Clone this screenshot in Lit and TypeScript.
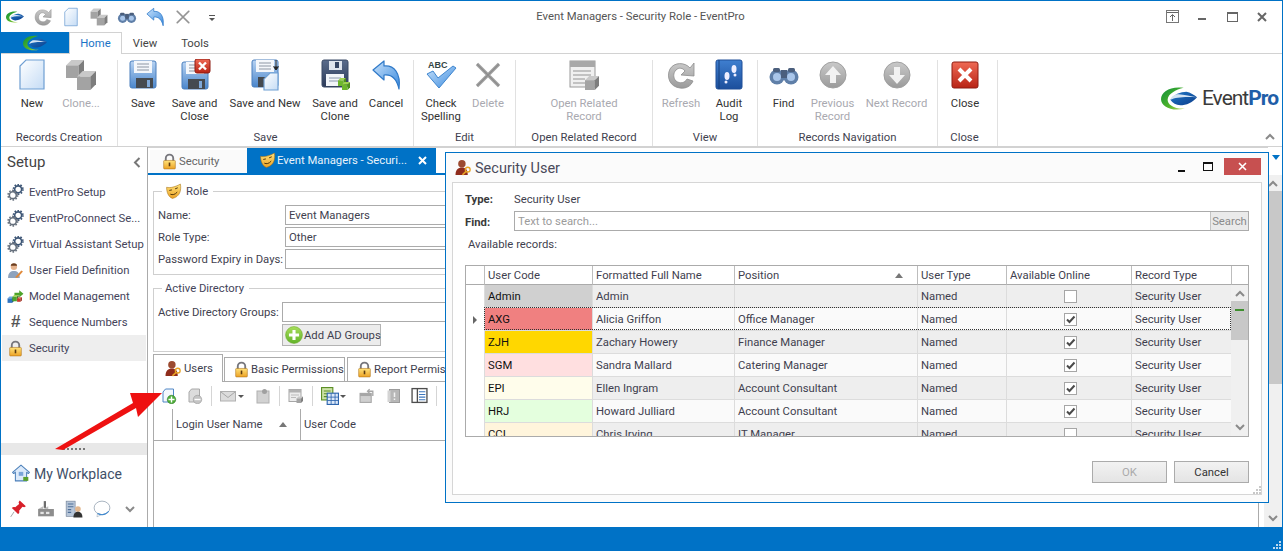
import { LitElement, html, css, svg } from "lit";
import { customElement } from "lit/decorators.js";

const ic = (s: number, body: unknown, vb = 32) =>
  html`<svg class="ic" width=${s} height=${s} viewBox="0 0 ${vb} ${vb}">${body}</svg>`;

const cube = (x: number, y: number, s: number, t = "#c9c9c9", l = "#a3a3a3", r = "#7d7d7d") => svg`
  <polygon points="${x},${y + s * 0.3} ${x + s * 0.3},${y} ${x + s},${y} ${x + s * 0.7},${y + s * 0.3}" fill=${t}/>
  <polygon points="${x},${y + s * 0.3} ${x + s * 0.7},${y + s * 0.3} ${x + s * 0.7},${y + s} ${x},${y + s}" fill=${l}/>
  <polygon points="${x + s * 0.7},${y + s * 0.3} ${x + s},${y} ${x + s},${y + s * 0.7} ${x + s * 0.7},${y + s}" fill=${r}/>`;

const swoosh = svg`
  <path d="M34 2 C14 -1 0 8 0 19 C0 30 16 38 36 33 C20 34 9 27 10 19 C11 11 22 5 34 2Z" fill="url(#gGreen)"/>
  <path d="M14 20 C18 12 30 8 38 8 C44 9 50 13 54 16 C50 21 42 27 32 28 C24 29 18 26 14 20Z" fill="url(#gBlue)"/>
  <path d="M14 20 C22 16 34 15 54 16 C44 15 30 10 22 12 C18 14 15 17 14 20Z" fill="#e8f2fb" opacity=".9"/>`;
const logoMark = (w: number, h: number) => html`<svg class="ic" width=${w} height=${h} viewBox="0 0 54 36">${swoosh}</svg>`;

const page = (x = 5, y = 2, w = 22, h = 28) => svg`
  <path d="M${x + 6} ${y}H${x + w}V${y + h}H${x}V${y + 6}Z" fill="url(#gPage)" stroke="#6f9fd3" stroke-width="1.2"/>`;

const floppy = (dark = false, yo = 2) => svg`
  <rect x="3" y=${yo} width="26" height="27" rx="2" fill=${dark ? "url(#gDark)" : "url(#gFloppy)"} stroke=${dark ? "#3b4a66" : "#4a7fbd"}/>
  ${dark
    ? svg`<rect x="10" y=${yo + 1} width="13" height="9" fill="#dfe5ee"/><rect x="16" y=${yo + 2} width="4" height="6" fill="#354564"/>
          <rect x="7" y=${yo + 14} width="18" height="12" fill="#f2f5f9"/><path d="M10 ${yo + 18}h12M10 ${yo + 21}h12" stroke="#8a98ad"/>`
    : svg`<rect x="7" y=${yo} width="18" height="12" fill="#f4f7fb"/><path d="M10 ${yo + 3}h12M10 ${yo + 6}h12M10 ${yo + 9}h12" stroke="#8d96a3"/>
          <rect x="9" y=${yo + 17} width="17" height="10" fill="#454a50"/><rect x="20" y=${yo + 19} width="3" height="7" fill="#7fa9da"/>`}`;

const undoPath = svg`<path d="M3 11 L14 2 V7 C24 6 31 14 29 30 C27 21 22 15 14 16 V21Z" fill="url(#gUndo)" stroke="#2f79c8" stroke-width="1.2" stroke-linejoin="round"/>`;
const refreshPath = svg`<path d="M25 9 C20 3 9 3 5 10 C1 18 5 28 15 29 C21 30 26 27 28 22 L22 20 C20 24 15 25 11 22 C8 19 8 14 11 11 C14 8 18 9 20 12 L16 16 L29 17 L29 4Z" fill="url(#gGrey)" stroke="#8d8d8d" stroke-width=".8"/>`;
const xPath = svg`<path d="M5 5 L27 27 M27 5 L5 27" stroke="#a5a5a5" stroke-width="3.4"/><path d="M5 5 L27 27 M27 5 L5 27" stroke="#8c8c8c" stroke-width="1.2"/>`;
const binoc = svg`
  <circle cx="9" cy="18" r="7.5" fill="#5f7fa8"/><circle cx="23" cy="18" r="7.5" fill="#5f7fa8"/>
  <rect x="13" y="11" width="6" height="8" fill="#4b5f7d"/>
  <circle cx="9" cy="18" r="4" fill="#a9c6ea"/><circle cx="23" cy="18" r="4" fill="#a9c6ea"/>
  <rect x="5" y="9" width="7" height="4" rx="1.5" fill="#4b5f7d"/><rect x="20" y="9" width="7" height="4" rx="1.5" fill="#4b5f7d"/>`;

const I = {
  qrefresh: ic(20, refreshPath),
  qnew: ic(20, page(6, 2, 20, 28)),
  clone: ic(32, svg`${cube(1, 1, 18)}${cube(12, 12, 19)}`),
  qclone: ic(18, svg`${cube(1, 1, 18)}${cube(12, 12, 19)}`),
  qfind: ic(20, binoc),
  qundo: ic(20, undoPath),
  qx: ic(18, xPath),
  new: ic(32, page(4, 1, 24, 29)),
  save: ic(32, floppy()),
  saveClose: ic(32, svg`${floppy(false, 3)}<rect x="16" y="0" width="15" height="14" rx="2" fill="url(#gRed)" stroke="#8e1c12"/><path d="M20 3.500l7 7m0-7l-7 7" stroke="#fff" stroke-width="2.400"/>`),
  saveNew: ic(32, svg`${floppy(false, 1)}${page(15, 14, 14, 17)}<path d="M27 1v9M24.500 7.500l2.500 3.500 2.500-3.500" stroke="#222" fill="#222"/>`),
  saveClone: ic(32, svg`${floppy(true, 1)}${cube(19, 19, 8, "#9ed24f", "#6cb52d", "#4d8f1c")}${cube(23, 23, 8, "#9ed24f", "#6cb52d", "#4d8f1c")}`),
  undo: ic(32, undoPath),
  check: ic(32, svg`<text x="3" y="9" font-family="Liberation Sans" font-weight="700" font-size="9" fill="#344">ABC</text>
    <path d="M2 15 L8 12 L13 19 L28 7 L31 9 L14 29Z" fill="url(#gUndo)" stroke="#3f86cf"/>`),
  del: ic(32, xPath),
  related: ic(32, svg`<rect x="2" y="2" width="25" height="26" fill="#f0f0f0" stroke="#9a9a9a"/><rect x="2" y="2" width="25" height="6" fill="#a8a8a8"/>
    <path d="M5 12h18M5 16h18M5 20h12M5 24h12" stroke="#b3b3b3" stroke-width="1.500"/>${cube(17, 17, 14)}`),
  refresh: ic(32, refreshPath),
  audit: ic(32, svg`<rect x="3" y="1" width="26" height="29" rx="2" fill="url(#gBook)" stroke="#1f4f98"/>
    <path d="M6 1v29" stroke="#16417f"/><ellipse cx="14" cy="17" rx="2.500" ry="4" fill="#eef"/><circle cx="13" cy="23" r="1.500" fill="#eef"/>
    <ellipse cx="21" cy="10" rx="2.500" ry="4" fill="#eef"/><circle cx="22" cy="16" r="1.500" fill="#eef"/>`),
  find: ic(32, binoc),
  prev: ic(32, svg`<circle cx="16" cy="16" r="13" fill="url(#gGrey)" stroke="#a0a0a0"/><path d="M16 7l8 9h-5v8h-6v-8h-5z" fill="#f2f2f2"/>`),
  next: ic(32, svg`<circle cx="16" cy="16" r="13" fill="url(#gGrey)" stroke="#a0a0a0"/><path d="M16 25l8-9h-5v-8h-6v8h-5z" fill="#f2f2f2"/>`),
  close: ic(32, svg`<rect x="3" y="3" width="26" height="26" rx="2" fill="url(#gRed)" stroke="#8e1c12"/><path d="M10 10l12 12m0-12l-12 12" stroke="#fff" stroke-width="4"/>`),
  gear: ic(17, svg`<circle cx="21" cy="10" r="6.500" fill="none" stroke="#3c5575" stroke-width="3"/><circle cx="21" cy="10" r="9" fill="none" stroke="#3c5575" stroke-width="3" stroke-dasharray="3 2.700"/>
    <circle cx="11" cy="21" r="6.500" fill="none" stroke="#66707d" stroke-width="3"/><circle cx="11" cy="21" r="9" fill="none" stroke="#66707d" stroke-width="3" stroke-dasharray="3 2.700"/>`),
  userPen: ic(17, svg`<circle cx="13" cy="9" r="6" fill="#e5b48f"/><path d="M7 7c1-6 11-6 12 0z" fill="#6b3d1e"/><path d="M2 30c0-10 5-13 11-13s11 3 11 13z" fill="#8ea3bd"/><path d="M17 27l10-11 3 2-10 11-4 1z" fill="#e0893a"/>`),
  model: ic(17, svg`${cube(1, 16, 12, "#6ea7e0", "#2f74c0", "#1f5596")}${cube(10, 13, 12, "#9ed24f", "#4da32b", "#347a1a")}${cube(19, 17, 9, "#ee8075", "#cc3a2c", "#962417")}
    <path d="M14 9h9v-5l8 7-8 7v-5h-9z" fill="#4da32b"/>`),
  lock: ic(17, svg`<path d="M9 15V10a7 7 0 0 1 14 0v5" fill="none" stroke="#77777d" stroke-width="3.500"/><rect x="5" y="14" width="22" height="16" rx="1.500" fill="url(#gLock)" stroke="#a96c15"/><rect x="14.500" y="18" width="3" height="7" fill="#5b3a10"/>`),
  mask: ic(17, svg`<path d="M3 8 C10 10 20 7 29 2 C31 14 28 26 14 29 C6 26 3 17 3 8Z" fill="url(#gLock)" stroke="#a36c10"/>
    <path d="M8 14l5-1M19 11l5-2M10 21c4 2 9 1 13-4" stroke="#4d3208" stroke-width="1.800" fill="none"/>`),
  plus: ic(18, svg`<circle cx="16" cy="16" r="15" fill="url(#gPlus)" stroke="#6eab2f"/><path d="M16 7v18M7 16h18" stroke="#fff" stroke-width="5.500"/>`),
  users: ic(17, svg`<circle cx="13" cy="9" r="7" fill="#9c4a30"/><path d="M1 30c0-10 5-14 12-14s11 4 11 14z" fill="#8f2c1c"/><circle cx="24" cy="20" r="4.500" fill="none" stroke="#e8a326" stroke-width="2.500"/><path d="M21 23l-7 7" stroke="#e8a326" stroke-width="3"/>`),
  home: ic(18, svg`<path d="M16 2L1 15l2 2 3-2.500V30h20V14.500l3 2.500 2-2z" fill="#dceafa" stroke="#4b7fb9" stroke-width="1.800" stroke-linejoin="round"/><rect x="12" y="14" width="8" height="7" fill="#7aa5d8"/><rect x="20" y="23" width="9" height="7" fill="#5aa02c"/>`),
  pin: ic(18, svg`<path d="M19 1l11 10-3 2-3-1-6 7c1 3 0 5-2 6L5 14c2-2 4-2 6-1l7-6-1-3z" fill="#d8202a"/><path d="M9 21L3 30" stroke="#999" stroke-width="1.500"/>`),
  factory: ic(18, svg`<rect x="2" y="16" width="28" height="13" fill="#8d8d8d"/><path d="M2 16l9-5v5l9-5v5h10" fill="#bdbdbd"/><rect x="12" y="2" width="4" height="12" fill="#6d6d6d"/><rect x="6" y="21" width="6" height="4" fill="#e4e4e4"/><rect x="16" y="21" width="6" height="4" fill="#e4e4e4"/>`),
  building: ic(18, svg`<rect x="2" y="2" width="16" height="27" fill="#b7c6d9" stroke="#67778d"/><path d="M5 7h10M5 12h10M5 17h6M5 22h6" stroke="#4f6f98" stroke-width="2"/><circle cx="23" cy="16" r="5" fill="#e3b78e"/><path d="M15 31c0-7 4-10 8-10s8 3 8 10z" fill="#333"/>`),
  bubble: ic(18, svg`<ellipse cx="16" cy="14" rx="14" ry="12" fill="#fff" stroke="#9aa7b5" stroke-width="1.500"/><path d="M8 24l-1 6 8-4z" fill="#fff" stroke="#9aa7b5"/><path d="M8 24c6 3 14 3 20-4" stroke="#3d88d0" stroke-width="2" fill="none"/>`),
  tAdd: ic(16, svg`<path d="M9 2H25V28H4V8Z" fill="#f4f8fd" stroke="#4f86c6" stroke-width="2"/><circle cx="21" cy="23" r="8.500" fill="#4fae3a" stroke="#1f6d17"/><path d="M21 17v12M15 23h12" stroke="#fff" stroke-width="2.800"/>`),
  tRemove: ic(16, svg`<path d="M9 2H25V28H4V8Z" fill="#dcdcdc" stroke="#a8a8a8" stroke-width="2"/><circle cx="21" cy="23" r="8.500" fill="#c4c4c4" stroke="#8f8f8f"/><path d="M15 23h12" stroke="#fff" stroke-width="2.800"/>`),
  tMail: ic(16, svg`<rect x="1" y="7" width="30" height="19" fill="#dcdcdc" stroke="#b0b0b0" stroke-width="2"/><path d="M2 8l14 11 14-11" stroke="#a8a8a8" stroke-width="2" fill="none"/>`),
  tClip: ic(16, svg`<rect x="4" y="6" width="24" height="24" fill="#d2d2d2" stroke="#b0b0b0" stroke-width="2"/><circle cx="19" cy="7" r="5" fill="#a0a0a0"/>`),
  tSheet: ic(16, svg`<rect x="2" y="3" width="24" height="24" fill="#ededed" stroke="#a6a6a6" stroke-width="2"/><rect x="2" y="3" width="24" height="6" fill="#b2b2b2"/><path d="M6 14h16M6 19h10" stroke="#bbb" stroke-width="2"/>${cube(17, 17, 13)}`),
  tGrid: ic(18, svg`<rect x="1" y="1" width="20" height="22" fill="#cde3a8" stroke="#5c8f26" stroke-width="2"/><path d="M5 7h12M5 12h12M5 17h12" stroke="#5c8f26" stroke-width="2"/><rect x="11" y="11" width="20" height="20" fill="#dce9f9" stroke="#2f66ae" stroke-width="2"/><path d="M11 18h20M11 24h20M18 11v20M25 11v20" stroke="#2f66ae" stroke-width="1.500"/>`),
  tWin: ic(17, svg`<rect x="2" y="12" width="21" height="17" fill="#cfcfcf" stroke="#a6a6a6" stroke-width="2"/><rect x="2" y="12" width="21" height="5" fill="#a6a6a6"/><path d="M17 8h9v9M20 4l-4 4 4 4" fill="none" stroke="#a6a6a6" stroke-width="2.500"/>`),
  tBook: ic(16, svg`<rect x="7" y="3" width="20" height="26" fill="#b7b7b7" stroke="#9c9c9c" stroke-width="2"/><rect x="3" y="5" width="6" height="23" fill="#d4d4d4"/><path d="M17 9v9M17 21v3" stroke="#f2f2f2" stroke-width="3"/>`),
  tPanel: ic(17, svg`<rect x="2" y="3" width="28" height="26" fill="#fff" stroke="#4e4e4e" stroke-width="2.500"/><path d="M12 3v26" stroke="#4e4e4e" stroke-width="2.500"/><path d="M15 9h12M15 14h12M15 19h12M15 24h12" stroke="#3d77bd" stroke-width="2"/>`),
  tRound: ic(16, svg`<circle cx="16" cy="16" r="14" fill="#cfcfcf" stroke="#a8a8a8" stroke-width="2"/>`),
};

const check = html`<svg class="ic" width="13" height="13" viewBox="0 0 13 13"><rect x=".5" y=".5" width="12" height="12" fill="#fff" stroke="#a6a6a6"/><path d="M3 6.500l2.500 2.500 5-5.500" fill="none" stroke="#4a4a4a" stroke-width="2"/></svg>`;
const box = html`<svg class="ic" width="13" height="13" viewBox="0 0 13 13"><rect x=".5" y=".5" width="12" height="12" fill="#fff" stroke="#a6a6a6"/></svg>`;
const chev = (up: boolean, c = "#8a8a8a") => html`<svg class="ic" width="10" height="7" viewBox="0 0 10 7"><path d=${up ? "M1 6l4-4 4 4" : "M1 1l4 4 4-4"} fill="none" stroke=${c} stroke-width="2"/></svg>`;

interface Btn { l: string; w: number; i: unknown; off?: boolean; }
interface Group { label: string; w: number; cls?: string; btns: Btn[]; }
const groups: Group[] = [
  { label: "Records Creation", w: 117, cls: "g1", btns: [
    { l: "New", w: 48, i: I.new }, { l: "Clone...", w: 50, i: I.clone, off: true } ] },
  { label: "Save", w: 296, cls: "g2", btns: [
    { l: "Save", w: 38, i: I.save }, { l: "Save and Close", w: 65, i: I.saveClose },
    { l: "Save and New", w: 76, i: I.saveNew }, { l: "Save and Clone", w: 64, i: I.saveClone }, { l: "Cancel", w: 38, i: I.undo } ] },
  { label: "Edit", w: 102, cls: "g3", btns: [
    { l: "Check Spelling", w: 50, i: I.check }, { l: "Delete", w: 44, i: I.del, off: true } ] },
  { label: "Open Related Record", w: 137, btns: [ { l: "Open Related Record", w: 100, i: I.related, off: true } ] },
  { label: "View", w: 105, btns: [
    { l: "Refresh", w: 48, i: I.refresh, off: true }, { l: "Audit Log", w: 48, i: I.audit } ] },
  { label: "Records Navigation", w: 180, btns: [
    { l: "Find", w: 44, i: I.find }, { l: "Previous Record", w: 54, i: I.prev, off: true }, { l: "Next Record", w: 74, i: I.next, off: true } ] },
  { label: "Close", w: 60, cls: "g7", btns: [ { l: "Close", w: 44, i: I.close } ] },
];

const side = [
  ["EventPro Setup", I.gear], ["EventProConnect Se...", I.gear], ["Virtual Assistant Setup", I.gear],
  ["User Field Definition", I.userPen], ["Model Management", I.model],
  ["Sequence Numbers", html`<span class="hash">#</span>`], ["Security", I.lock],
] as [string, unknown][];

const rows = [
  ["Admin", "Admin", "", false, "#d0d0d0"],
  ["AXG", "Alicia Griffon", "Office Manager", true, "#f08080"],
  ["ZJH", "Zachary Howery", "Finance Manager", true, "#ffd700"],
  ["SGM", "Sandra Mallard", "Catering Manager", true, "#ffdfe0"],
  ["EPI", "Ellen Ingram", "Account Consultant", true, "#fffdeb"],
  ["HRJ", "Howard Julliard", "Account Consultant", true, "#e4ffde"],
  ["CCI", "Chris Irving", "IT Manager", false, "#fff5dc"],
] as [string, string, string, boolean, string][];

@customElement("app-root")
export class AppRoot extends LitElement {
  static styles = css`
    :host { display: block; position: relative; width: 1283px; height: 551px; overflow: hidden; background: #fff;
      font-family: Roboto, "Noto Sans", sans-serif; font-size: 11.3px; color: #3f3f4f; }
    * { box-sizing: border-box; }
    .ic { display: block; flex: none; }
    .defs { position: absolute; width: 0; height: 0; }
    .app { display: flex; flex-direction: column; height: 551px; border: 1px solid #0072c6; border-bottom: 0; }
    .title { height: 31px; display: flex; align-items: center; position: relative; flex: none; }
    .qat { display: flex; align-items: center; }
    .qat > span { width: 28px; display: flex; justify-content: center; }
    .qat .dd { width: 6px; height: 4px; margin-left: 1px; border-top: 1px solid #555; position: relative; }
    .ddtri { width: 0; height: 0; border: 3px solid transparent; border-top: 3px solid #555; border-bottom: 0; display: block; margin-top: 2px; }
    .caption { position: absolute; left: 0; right: 2px; text-align: center; font-size: 11.3px; color: #555; top: 9px; }
    .winbtns { margin-left: auto; margin-right: 5px; display: flex; align-items: center; }
    .winbtns span { width: 30px; display: flex; justify-content: center; }
    .menu { height: 22px; display: flex; border-bottom: 1px solid #d2d2d2; flex: none; }
    .file { width: 68px; height: 21px; background: #0072c6; display: flex; align-items: center; justify-content: center; }
    .mt { width: 50px; text-align: center; line-height: 24px; color: #444; }
    .mt.on { width: 53px; height: 22px; color: #1a73c6; background: #fff; border: 1px solid #d2d2d2; border-bottom: 0; line-height: 22px; }
    .mt.v { margin-left: -2px; }
    .ribbon { height: 93px; display: flex; border-bottom: 1px solid #d2d2d2; flex: none; position: relative; }
    .group { display: flex; flex-direction: column; flex: none; align-items: stretch; position: relative; height: 86px; margin-top: 6px; border-right: 1px solid #e1e1e1; }
    .gbtns { display: flex; justify-content: center; height: 70px; }
    .g1 .gbtns { justify-content: flex-start; padding-left: 7px; }
    .g2 .gbtns { justify-content: flex-start; padding-left: 6px; }
    .g3 .gbtns { justify-content: flex-start; padding-left: 2px; }
    .g7 .gbtns { justify-content: flex-start; padding-left: 5px; }
    .g7 .glabel { padding-right: 6px; }
    .btn { display: flex; flex-direction: column; align-items: center; text-align: center; line-height: 13px; flex: none; color: #333; }
    .btn .ic { margin-bottom: 6px; margin-top: -1px; }
    .btn.off { color: #a9a9b0; }
    .glabel { text-align: center; line-height: 16px; color: #3f3f4f; margin-top: 1px; white-space: nowrap; }
    .brand { margin-left: auto; margin-right: 4px; display: flex; align-items: center; align-self: flex-start; margin-top: 31px; gap: 5px; }
    .brand b { font-size: 21px; letter-spacing: -1px; font-weight: 400; color: #3a3a3a; line-height: 27px; font-family: Roboto, sans-serif; }
    .brand b i { font-style: normal; font-weight: 700; color: #1f5ea8; }
    .collapse { position: absolute; right: 7px; bottom: 6px; }
    .body { flex: 1; min-height: 0; display: flex; }
    .side { width: 147px; flex: none; border-right: 1px solid #ababab; display: flex; flex-direction: column; }
    .shead { height: 32px; padding: 5px 6px 0 6px; display: flex; justify-content: space-between; font-size: 15px; color: #444; line-height: 20px; }
    .shead svg { margin: 5px 0 0; }
    .sitem { height: 26px; display: flex; align-items: center; gap: 5px; color: #44445a; white-space: nowrap; margin: 0 1px; padding-left: 5px; }
    .sitem.sel { background: #eee; }
    .hash { width: 17px; text-align: center; font: italic 700 17px "Liberation Sans", sans-serif; color: #555; }
    .sp { flex: 1; }
    .splitter { height: 12px; background: #e8e8e8; display: flex; justify-content: center; align-items: center; gap: 2px; }
    .splitter i { width: 2px; height: 2px; background: #777; }
    .wp { height: 36px; display: flex; align-items: center; gap: 4px; padding-left: 11px; font-size: 14px; color: #3f4f68; }
    .wp span { padding-top: 1px; }
    .wpicons { height: 36px; display: flex; align-items: center; padding-left: 3px; }
    .wpicons span { width: 28px; display: flex; justify-content: center; }
    .main { flex: 1; min-width: 0; display: flex; flex-direction: column; }
    .dtabs { height: 28px; flex: none; display: flex; padding: 2px 0 0 2px; border-top: 1px solid #d2d2d2; border-bottom: 2px solid #0072c6; margin-right: 14px; position: relative; }
    .dt { display: flex; align-items: center; gap: 1px; padding-left: 11px; height: 23px; white-space: nowrap; }
    .dt.a { width: 97px; color: #666; background: #fafafa; }
    .dt.b { width: 189px; background: #0072c6; color: #e9f3fb; padding-left: 12px; margin-top: -2px; height: 25px; position: relative; }
    .dt.b .x { position: absolute; right: 9px; top: 8px; }
    .tri { position: absolute; right: -12px; top: 7px; width: 0; height: 0; border: 4px solid transparent; border-top: 5px solid #0072c6; border-bottom: 0; }
    .under { flex: 1; min-height: 0; display: flex; }
    .pane { flex: 1; min-width: 0; display: flex; flex-direction: column; padding: 7px 5px 0 5px; overflow: hidden; }
    fieldset { margin: 0; padding: 5px 6px 3px 4px; border: 1px solid #cfcfcf; min-width: 0; }
    legend { padding: 0 5px 0 3px; margin-left: 4px; height: 18px; display: flex; align-items: center; gap: 4px; color: #44445a; }
    .frow { height: 20px; margin-bottom: 2px; display: flex; align-items: center; white-space: nowrap; }
    .flabel { width: 127px; flex: none; padding-top: 1px; }
    .inp { flex: 1; height: 20px; border: 1px solid #ababab; padding-left: 3px; line-height: 19px; color: #3f3f4f; }
    .ad { margin-top: 5px; padding: 6px 6px 5px 4px; }
    .ad legend { margin-left: 4px; height: 16px; }
    .ad .flabel { width: 124px; }
    .addbtn { margin-left: 124px; width: 99px; height: 22px; border: 1px solid #b3b3b3; background: #ececec; display: flex; align-items: center; gap: 1px; padding-left: 2px; color: #3f3f4f; white-space: nowrap; }
    .stabs { flex: none; height: 28px; margin-top: 2px; display: flex; align-items: flex-end; border-bottom: 1px solid #ababab; }
    .st { height: 24px; display: flex; align-items: center; gap: 1px; border: 1px solid #ababab; border-bottom: 0; white-space: nowrap; margin-left: 2px; padding-left: 8px; }
    .st.on { height: 28px; margin: 0 0 -1px; background: #fff; padding-left: 11px; gap: 2px; width: 70px; }
    .st.basic { width: 121px; margin-left: 1px; } .st.rep { flex: 1; }
    .page { flex: 1; border-left: 1px solid #ababab; border-right: 1px solid #ababab; display: flex; flex-direction: column; }
    .tools { height: 27px; flex: none; display: flex; align-items: center; padding-left: 7px; }
    .tools > span { display: flex; align-items: center; justify-content: center; flex: none; }
    .dd10 { width: 10px; } .dd8 { width: 8px; }
    .ml9 { margin-left: 9px; } .ml10 { margin-left: 10px; } .ml12 { margin-left: 12px; }
    .sep { width: 1px; height: 20px; background: #d5d5d5; margin: 0 8px; flex: none; }
    .lhead { height: 32px; flex: none; display: flex; border-bottom: 1px solid #ababab; align-items: center; }
    .lhead > div { height: 31px; display: flex; align-items: center; border-left: 1px solid #ababab; padding-left: 3px; }
    .lhead .c0 { width: 18px; border-left: 0; } .lhead .c1 { width: 128px; justify-content: space-between; padding-right: 13px; }
    .sorttri { width: 0; height: 0; border: 4px solid transparent; border-bottom: 5px solid #777; border-top: 0; display: block; }
    .vbar { width: 18px; flex: none; background: #f0f0f0; display: flex; flex-direction: column; align-items: center; padding-top: 5px; position: relative; }
    .thumb { width: 18px; height: 193px; background: #c8c8c8; margin-top: 4px; }
    .vbar .dn { margin-top: auto; margin-bottom: 5px; }
    .status { height: 24px; flex: none; background: #0072c6; margin: 0 -1px; display: flex; justify-content: flex-end; align-items: flex-end; }
    .grip { display: grid; grid-template-columns: repeat(3, 2px); gap: 1px; padding: 0 2px 2px 0; }
    .grip i { width: 2px; height: 2px; background: #bcd7ee; }
    .grip i.n { background: transparent; }
    .dlg { position: absolute; left: 445px; top: 152px; width: 824px; height: 351px; background: #fbfbfb; border: 1px solid #0072c6; display: flex; flex-direction: column; }
    .dtitle { height: 29px; flex: none; display: flex; align-items: center; padding-left: 9px; gap: 3px; font-size: 14.5px; color: #4a4a5a; position: relative; }
    .dtitle > span { padding-top: 2px; }
    .dwin { margin-left: auto; display: flex; align-items: center; margin-right: 7px; margin-top: -1px; align-self: flex-start; padding-top: 6px; }
    .dwin .cl { width: 37px; height: 17px; background: #c75050; display: flex; align-items: center; justify-content: center; }
    .dwin .mx { width: 8px; height: 6px; border: 1px solid #111; border-top-width: 2px; margin: 0 11px 0 18px; box-sizing: content-box; }
    .dwin .mn { width: 7px; height: 2px; background: #111; margin-top: 8px; }
    .dbody { flex: 1; margin: 0 6px 7px; border: 1px solid #d6d6d6; background: #fff; display: flex; flex-direction: column; padding: 0 12px; position: relative; }
    .drow { display: flex; align-items: center; height: 22px; }
    .drow b { font-weight: 700; width: 49px; color: #3a3a3a; flex: none; padding-top: 2px; }
    .drow span { padding-top: 2px; }
    .drow.t { margin-top: 4px; }
    .drow.t + .drow { margin-top: 1px; }
    .search { flex: 1; height: 20px; border: 1px solid #ababab; display: flex; min-width: 0; }
    .search span.ph { flex: 1; padding: 0 0 0 3px; line-height: 19px; color: #9b9b9b; }
    .search span.go { width: 38px; padding: 0; background: #eaeaea; border-left: 1px solid #c4c4c4; text-align: center; line-height: 19px; color: #8b8b8b; }
    .avail { margin: 4px 0 0 3px; height: 29px; line-height: 18px; }
    .grid { height: 172px; border: 1px solid #ababab; overflow: hidden; display: grid; position: relative;
      grid-template-columns: 18px 108px 142px 183px 89px 125px 100px 17px; grid-template-rows: 19px repeat(7, 23px); }
    .grid .h { height: 19px; background: #fff; border-left: 1px solid #bdbdbd; border-bottom: 1px solid #ababab; padding: 0 0 0 3px; display: flex; justify-content: space-between; align-items: center; }
    .grid .h:first-child { border-left: 0; }
    .grid .h.pos { padding-right: 14px; }
    .c { border-left: 1px solid #dcdcdc; border-bottom: 1px solid #dcdcdc; padding: 0 0 0 3px; white-space: nowrap; display: flex; align-items: center; }
    .c.code { color: #111; }
    .c.ctr { justify-content: center; }
    .c.ind { border-left: 0; background: #fff; border-bottom: 0; justify-content: center; padding: 0; grid-column: 1; }
    .ev { background: #eee; } .od { background: #fafafa; }
    .focus { position: absolute; left: 18px; top: 41px; width: 747px; height: 23px; border: 1px dotted #333; pointer-events: none; }
    .indtri { width: 0; height: 0; border: 4px solid transparent; border-left: 4px solid #666; border-right: 0; }
    .gbar { grid-column: 8; grid-row: 2 / span 7; background: #f0f0f0; display: flex; flex-direction: column; align-items: center; padding-top: 5px; height: 151px; position: relative; }
    .gthumb { width: 17px; height: 39px; margin-top: 4px; background: #c8c8c8; padding: 8px 4px 0; }
    .gthumb i { display: block; height: 2px; background: #3e8f2e; }
    .gbar .dn { margin-top: auto; margin-bottom: 5px; }
    .dfoot { display: flex; justify-content: flex-end; gap: 7px; margin-top: 24px; }
    .pb { width: 75px; height: 22px; border: 1px solid #ababab; background: linear-gradient(#f2f2f2, #e4e4e4); text-align: center; line-height: 21px; color: #333; }
    .pb.off { color: #aaa; }
    .dgrip { position: absolute; right: 0; bottom: 0; }
    .arrow { position: absolute; left: 0; top: 0; pointer-events: none; }
  `;

  grip() {
    return html`<div class="grip">${[0, 0, 1, 0, 1, 1, 1, 1, 1].map((v) => html`<i class=${v ? "" : "n"}></i>`)}</div>`;
  }

  render() {
    return html`
      <svg class="defs" aria-hidden="true"><defs>
        <linearGradient id="gGreen" x1="0" y1="0" x2="1" y2="1"><stop offset="0" stop-color="#0d8f3c"/><stop offset=".6" stop-color="#52b52a"/><stop offset="1" stop-color="#c5dd6a"/></linearGradient>
        <linearGradient id="gBlue" x1="0" y1="0" x2="1" y2="1"><stop offset="0" stop-color="#1e78c8"/><stop offset="1" stop-color="#0d3d8a"/></linearGradient>
        <linearGradient id="gPage" x1="0" y1="0" x2="1" y2="1"><stop offset="0" stop-color="#fff"/><stop offset="1" stop-color="#c5dcf5"/></linearGradient>
        <linearGradient id="gFloppy" x1="0" y1="0" x2="0" y2="1"><stop offset="0" stop-color="#b8d3f2"/><stop offset="1" stop-color="#4a86cc"/></linearGradient>
        <linearGradient id="gDark" x1="0" y1="0" x2="0" y2="1"><stop offset="0" stop-color="#5a6c8c"/><stop offset="1" stop-color="#2b3a58"/></linearGradient>
        <linearGradient id="gRed" x1="0" y1="0" x2="0" y2="1"><stop offset="0" stop-color="#ef6a55"/><stop offset="1" stop-color="#b82315"/></linearGradient>
        <linearGradient id="gUndo" x1="0" y1="0" x2="1" y2="1"><stop offset="0" stop-color="#c8e2fb"/><stop offset="1" stop-color="#3a8ade"/></linearGradient>
        <linearGradient id="gGrey" x1="0" y1="0" x2="0" y2="1"><stop offset="0" stop-color="#c9c9c9"/><stop offset="1" stop-color="#9a9a9a"/></linearGradient>
        <linearGradient id="gBook" x1="0" y1="0" x2="0" y2="1"><stop offset="0" stop-color="#3f7fd0"/><stop offset="1" stop-color="#1c4f9c"/></linearGradient>
        <linearGradient id="gLock" x1="0" y1="0" x2="0" y2="1"><stop offset="0" stop-color="#ffe27a"/><stop offset="1" stop-color="#eda224"/></linearGradient>
        <linearGradient id="gPlus" x1="0" y1="0" x2="0" y2="1"><stop offset="0" stop-color="#a7dd5a"/><stop offset="1" stop-color="#62b32a"/></linearGradient>
      </defs></svg>

      <div class="app">
        <div class="title">
          <div class="qat">
            <span>${logoMark(18, 12)}</span><span>${I.qrefresh}</span><span>${I.qnew}</span><span>${I.qclone}</span><span>${I.qfind}</span><span>${I.qundo}</span><span>${I.qx}</span>
            <span><i class="dd"><i class="ddtri"></i></i></span>
          </div>
          <div class="caption">Event Managers - Security Role - EventPro</div>
          <div class="winbtns">
            <span><svg class="ic" width="13" height="13" viewBox="0 0 13 13"><rect x=".5" y=".5" width="12" height="12" fill="none" stroke="#777"/><path d="M1 2.500h11M6.500 11V5M4 7l2.500-2.500L9 7" fill="none" stroke="#666"/></svg></span>
            <span><svg class="ic" width="10" height="10" viewBox="0 0 10 10"><rect x="1" y="6" width="8" height="2" fill="#666"/></svg></span>
            <span><svg class="ic" width="11" height="10" viewBox="0 0 11 10"><rect x=".5" y=".5" width="10" height="9" fill="none" stroke="#666"/><rect x="0" y="0" width="11" height="2" fill="#666"/></svg></span>
            <span><svg class="ic" width="10" height="10" viewBox="0 0 10 10"><path d="M1 1l8 8M9 1l-8 8" stroke="#666" stroke-width="2"/></svg></span>
          </div>
        </div>
        <div class="menu">
          <div class="file">${logoMark(24, 16)}</div>
          <div class="mt on">Home</div><div class="mt v">View</div><div class="mt">Tools</div>
        </div>
        <div class="ribbon">
          ${groups.map((g) => html`
            <div class="group ${g.cls ?? ""}" style="width:${g.w}px">
              <div class="gbtns">
                ${g.btns.map((b) => html`<div class="btn ${b.off ? "off" : ""}" style="width:${b.w}px">${b.i}${b.l}</div>`)}
              </div>
              <div class="glabel">${g.label}</div>
            </div>`)}
          <div class="brand">${logoMark(36, 27)}<b>Event<i>Pro</i></b></div>
          <div class="collapse">${chev(true)}</div>
        </div>
        <div class="body">
          <div class="side">
            <div class="shead"><span>Setup</span><svg class="ic" width="8" height="11" viewBox="0 0 8 11"><path d="M6.500 1L2 5.500 6.500 10" fill="none" stroke="#777" stroke-width="2"/></svg></div>
            ${side.map(([t, i]) => html`<div class="sitem ${t === "Security" ? "sel" : ""}">${i}<span>${t}</span></div>`)}
            <div class="sp"></div>
            <div class="splitter">${[0, 1, 2, 3, 4, 5].map(() => html`<i></i>`)}</div>
            <div class="wp">${I.home}<span>My Workplace</span></div>
            <div class="wpicons"><span>${I.pin}</span><span>${I.factory}</span><span>${I.building}</span><span>${I.bubble}</span><span>${chev(false)}</span></div>
          </div>
          <div class="main">
            <div class="dtabs">
              <div class="dt a">${I.lock}<span>Security</span></div>
              <div class="dt b">${I.mask}<span>Event Managers - Securi...</span><svg class="ic x" width="9" height="9" viewBox="0 0 9 9"><path d="M1 1l7 7M8 1l-7 7" stroke="#fff" stroke-width="2"/></svg></div>
              <i class="tri"></i>
            </div>
            <div class="under">
              <div class="pane">
                <fieldset>
                  <legend>${I.mask}<span>Role</span></legend>
                  <div class="frow"><span class="flabel">Name:</span><div class="inp">Event Managers</div></div>
                  <div class="frow"><span class="flabel">Role Type:</span><div class="inp">Other</div></div>
                  <div class="frow"><span class="flabel">Password Expiry in Days:</span><div class="inp"></div></div>
                </fieldset>
                <fieldset class="ad">
                  <legend><span>Active Directory</span></legend>
                  <div class="frow"><span class="flabel">Active Directory Groups:</span><div class="inp"></div></div>
                  <div class="addbtn">${I.plus}<span>Add AD Groups</span></div>
                </fieldset>
                <div class="stabs">
                  <div class="st on">${I.users}<span>Users</span></div>
                  <div class="st basic">${I.lock}<span>Basic Permissions</span></div>
                  <div class="st rep">${I.lock}<span>Report Permissions</span></div>
                </div>
                <div class="page">
                  <div class="tools">
                    <span>${I.tAdd}</span><span class="ml10">${I.tRemove}</span><i class="sep"></i>
                    <span>${I.tMail}</span><span class="dd10"><i class="ddtri"></i></span><span class="ml9">${I.tClip}</span><i class="sep"></i>
                    <span>${I.tSheet}</span><i class="sep"></i>
                    <span>${I.tGrid}</span><span class="dd8"><i class="ddtri"></i></span><span class="ml12">${I.tWin}</span><span class="ml10">${I.tBook}</span><span class="ml9">${I.tPanel}</span><i class="sep"></i><span>${I.tRound}</span>
                  </div>
                  <div class="lhead">
                    <div class="c0"></div>
                    <div class="c1"><span>Login User Name</span><i class="sorttri"></i></div>
                    <div>User Code</div>
                  </div>
                </div>
              </div>
              <div class="vbar">${chev(true)}<div class="thumb"></div><span class="dn">${chev(false)}</span></div>
            </div>
          </div>
        </div>
        <div class="status">${this.grip()}</div>
      </div>

      <div class="dlg">
        <div class="dtitle">${I.users}<span>Security User</span>
          <div class="dwin"><i class="mn"></i><i class="mx"></i><div class="cl"><svg class="ic" width="9" height="9" viewBox="0 0 9 9"><path d="M1 1l7 7M8 1l-7 7" stroke="#fff" stroke-width="1.600"/></svg></div></div>
        </div>
        <div class="dbody">
          <div class="drow t"><b>Type:</b><span>Security User</span></div>
          <div class="drow"><b>Find:</b><div class="search"><span class="ph">Text to search...</span><span class="go">Search</span></div></div>
          <div class="avail">Available records:</div>
          <div class="grid">
            <div class="h"></div><div class="h">User Code</div><div class="h">Formatted Full Name</div>
            <div class="h pos"><span>Position</span><i class="sorttri"></i></div>
            <div class="h">User Type</div><div class="h">Available Online</div><div class="h">Record Type</div><div class="h"></div>
            ${rows.map(([code, name, pos, on, color], i) => {
              const z = i % 2 ? "od" : "ev";
              return html`
                <div class="c ind">${i === 1 ? html`<i class="indtri"></i>` : ""}</div>
                <div class="c code" style="background:${color}">${code}</div>
                <div class="c ${z}">${name}</div><div class="c ${z}">${pos}</div><div class="c ${z}">Named</div>
                <div class="c ctr ${z}">${on ? check : box}</div><div class="c ${z}">Security User</div>`;
            })}
            <div class="gbar">${chev(true)}<div class="gthumb"><i></i></div><span class="dn">${chev(false)}</span></div>
            <div class="focus"></div>
          </div>
          <div class="dfoot"><div class="pb off">OK</div><div class="pb">Cancel</div></div>
          <svg class="dgrip" width="9" height="9" viewBox="0 0 9 9"><path d="M7 1h2v2H7zM4 4h2v2H4zM7 4h2v2H7zM1 7h2v2H1zM4 7h2v2H4zM7 7h2v2H7z" fill="#c8c8c8"/></svg>
        </div>
      </div>

      <svg class="arrow" width="200" height="470" viewBox="0 0 200 470"><polygon points="55,449 133,403 130,393 162,393 138,417 136,408 63,450" fill="#ee1111"/></svg>
    `;
  }
}
